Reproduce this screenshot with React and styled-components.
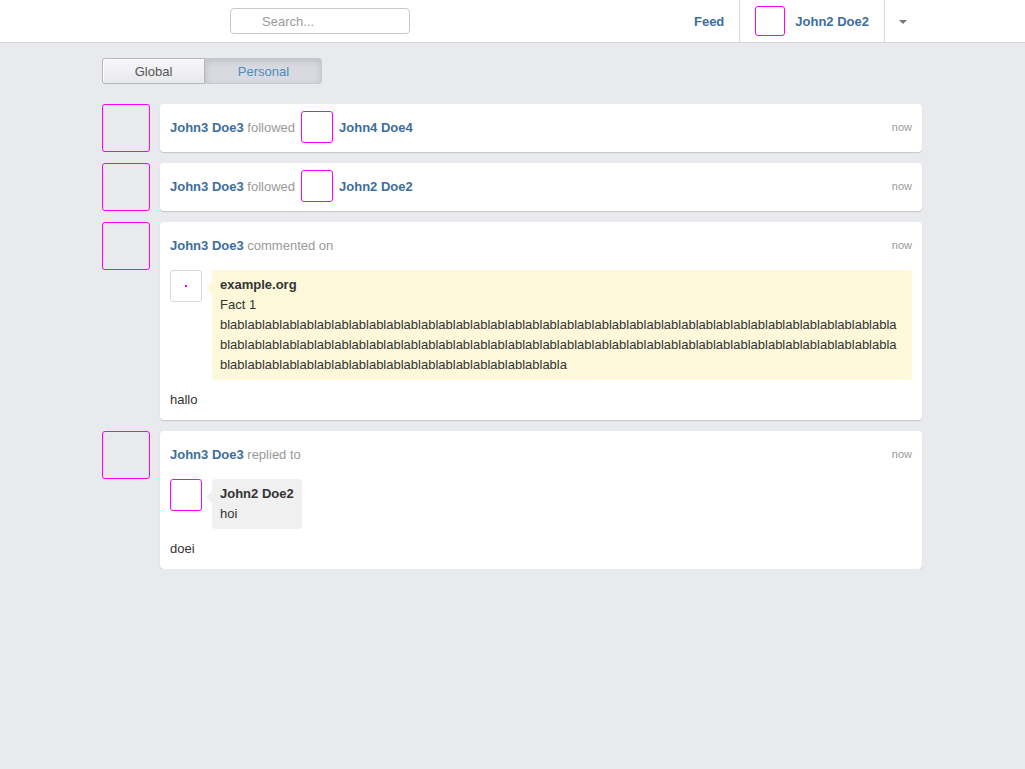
import React from 'react';
import styled, {createGlobalStyle} from 'styled-components';

const GlobalStyle = createGlobalStyle`
  body {
    margin: 0;
    background: #e9eaee;
    font-family: "Liberation Sans", Arial, Helvetica, sans-serif;
    font-size: 13px;
    color: #333;
  }
`

const NavBar = styled.header`
  height: 42px;
  background: #fff;
  border-bottom: 1px solid #d6d6d9;
`
const NavInner = styled.div`
  width: 820px;
  height: 100%;
  margin-left: calc(50% - 410.5px);
  display: flex;
  align-items: center;
`
const LogoSpace = styled.div`
  width: 128px;
`
const Search = styled.input`
  width: 180px;
  height: 26px;
  box-sizing: border-box;
  border: 1px solid #c9c9cc;
  border-radius: 4px;
  padding: 0 0 0 31px;
  font-family: inherit;
  font-size: 13px;
  color: #333;
  outline: none;
  &::placeholder {
    color: #9a9a9a;
  }
`
const NavRight = styled.nav`
  margin-left: auto;
  display: flex;
  align-items: stretch;
  height: 100%;
`
const NavItem = styled.a`
  display: flex;
  align-items: center;
  gap: 10px;
  padding: 0 ${p => p.$padR || 15}px 0 ${p => p.$padL || 15}px;
  color: #3d6e9b;
  font-weight: bold;
  text-decoration: none;
  border-right: ${p => p.$divider ? '1px solid #d9d9dc' : 'none'};
`
const Caret = styled.span`
  width: 0;
  height: 0;
  border-left: 4px solid transparent;
  border-right: 4px solid transparent;
  border-top: 4px solid #777;
  margin-top: 2px;
`
const Avatar = styled.div`
  width: ${p => p.$size}px;
  height: ${p => p.$size}px;
  flex-shrink: 0;
  box-sizing: border-box;
  border: 1px solid ${p => p.$plain ? '#d9d9d9' : '#ff00ff'};
  border-radius: 3px;
  display: flex;
  align-items: center;
  justify-content: center;
`
const Dot = styled.span`
  width: 2px;
  height: 2px;
  background: #ff00ff;
`

const Page = styled.main`
  width: 820px;
  margin: 15px 0 0 calc(50% - 410.5px);
`
const Tabs = styled.div`
  display: flex;
  height: 26px;
  margin-bottom: 20px;
`
const Tab = styled.button`
  box-sizing: border-box;
  width: ${p => p.$w}px;
  height: 26px;
  font-family: inherit;
  font-size: 13px;
  border: 1px solid ${p => p.$active ? '#c9cad0' : '#b4b5b9'};
  border-radius: ${p => p.$active ? '0 3px 3px 0' : '3px 0 0 3px'};
  color: ${p => p.$active ? '#4a8cba' : '#555'};
  background: ${p => p.$active ? '#d9dae1' : 'linear-gradient(#f7f7f9, #e8e9ec)'};
  box-shadow: ${p => p.$active ? 'inset 0 2px 6px rgba(0,0,0,0.13)' : 'inset 0 1px 0 #fff, inset 1px 0 0 #fff'};
  padding: 0;
`

const Feed = styled.div`
  display: flex;
  flex-direction: column;
  gap: 11px;
`
const Item = styled.div`
  display: flex;
  align-items: flex-start;
  gap: 10px;
`
const Card = styled.div`
  flex: 1;
  background: #fff;
  border-radius: 4px;
  box-shadow: 0 1px 1px rgba(0,0,0,0.16);
  padding: 9px 10px ${p => p.$body ? 10 : 11}px;
`
const Header = styled.div`
  display: flex;
  align-items: center;
  height: 28px;
  gap: 6px;
`
const Name = styled.a`
  color: #3d6e9b;
  font-weight: bold;
  text-decoration: none;
`
const Muted = styled.span`
  color: #999;
`
const Time = styled.span`
  margin-left: auto;
  color: #999;
  font-size: 11px;
`
const Quote = styled.div`
  display: flex;
  align-items: flex-start;
  gap: 10px;
  margin-top: 11px;
`
const Bubble = styled.div`
  position: relative;
  ${p => p.$fill ? 'flex: 1;' : ''}
  background: ${p => p.$bg};
  border-radius: 4px;
  padding: 5px ${p => p.$fill ? 12 : 8}px 5px 8px;
  line-height: 20px;
  word-break: break-all;
  &::before {
    content: "";
    position: absolute;
    left: -6px;
    top: 12px;
    border-top: 6px solid transparent;
    border-bottom: 6px solid transparent;
    border-right: 6px solid ${p => p.$bg};
  }
`
const Title = styled.div`
  font-weight: bold;
`
const Body = styled.p`
  margin: 10px 0 0;
  line-height: 20px;
`

const Follow = ({who, target}) => (
    <Item>
        <Avatar $size={48}/>
        <Card>
            <Header>
                <span><Name>{who}</Name> <Muted>followed</Muted></span>
                <Avatar $size={32}/>
                <Name>{target}</Name>
                <Time>now</Time>
            </Header>
        </Card>
    </Item>
);

const App = () => {
    return (
        <>
            <GlobalStyle/>
            <NavBar>
                <NavInner>
                    <LogoSpace/>
                    <Search placeholder="Search..."/>
                    <NavRight>
                        <NavItem $divider>Feed</NavItem>
                        <NavItem $divider>
                            <Avatar $size={30}/>
                            John2 Doe2
                        </NavItem>
                        <NavItem $padL={14} $padR={15}><Caret/></NavItem>
                    </NavRight>
                </NavInner>
            </NavBar>
            <Page>
                <Tabs>
                    <Tab $w={103}>Global</Tab>
                    <Tab $w={117} $active>Personal</Tab>
                </Tabs>
                <Feed>
                    <Follow who="John3 Doe3" target="John4 Doe4"/>
                    <Follow who="John3 Doe3" target="John2 Doe2"/>
                    <Item>
                        <Avatar $size={48}/>
                        <Card $body>
                            <Header>
                                <span><Name>John3 Doe3</Name> <Muted>commented on</Muted></span>
                                <Time>now</Time>
                            </Header>
                            <Quote>
                                <Avatar $size={32} $plain><Dot/></Avatar>
                                <Bubble $bg="#fcf8d9" $fill>
                                    <Title>example.org</Title>
                                    <div>Fact 1</div>
                                    <div>{'bla'.repeat(98)}</div>
                                </Bubble>
                            </Quote>
                            <Body>hallo</Body>
                        </Card>
                    </Item>
                    <Item>
                        <Avatar $size={48}/>
                        <Card $body>
                            <Header>
                                <span><Name>John3 Doe3</Name> <Muted>replied to</Muted></span>
                                <Time>now</Time>
                            </Header>
                            <Quote>
                                <Avatar $size={32}/>
                                <Bubble $bg="#f0f0f0">
                                    <Title>John2 Doe2</Title>
                                    <div>hoi</div>
                                </Bubble>
                            </Quote>
                            <Body>doei</Body>
                        </Card>
                    </Item>
                </Feed>
            </Page>
        </>
    );
};

export default App;
